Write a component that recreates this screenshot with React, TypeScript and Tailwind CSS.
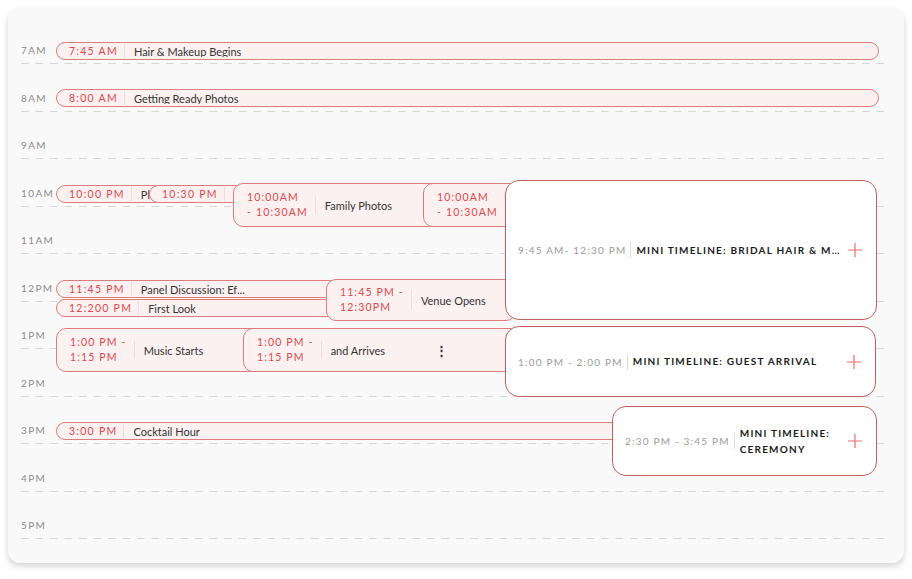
import React from 'react';

const HOURS = ['7AM', '8AM', '9AM', '10AM', '11AM', '12PM', '1PM', '2PM', '3PM', '4PM', '5PM'];

interface PillProps {
  time: string;
  title: string;
  left: number;
  top: number;
  width: number;
}

const Pill: React.FC<PillProps> = ({ time, title, left, top, width }) => (
  <div
    className="absolute flex h-[18px] items-center overflow-hidden rounded-full border border-[#dc7c7b] bg-[#fcf1f1]"
    style={{ left, top, width }}
  >
    <span className="whitespace-nowrap pl-[12px] pr-[6px] text-[10.5px] leading-none tracking-[0.12em] text-[#e0474c]">
      {time}
    </span>
    <span className="h-[14px] w-px bg-[#ecdcdc]" />
    <span className="truncate pl-[9px] text-[11px] leading-none text-[#333]">{title}</span>
  </div>
);

interface BoxProps {
  lines: string[];
  title: string;
  left: number;
  top: number;
  width: number;
  height: number;
  menu?: boolean;
}

const Box: React.FC<BoxProps> = ({ lines, title, left, top, width, height, menu }) => (
  <div
    className="absolute flex items-center rounded-[10px] border border-[#dc7c7b] bg-[#fcf1f1]"
    style={{ left, top, width, height }}
  >
    <div className="flex flex-col gap-[4px] pl-[13px] pr-[7px]">
      {lines.map(l => (
        <span key={l} className="whitespace-nowrap text-[10.5px] leading-[11px] tracking-[0.11em] text-[#e0474c]">
          {l}
        </span>
      ))}
    </div>
    <span className="h-[18px] w-px bg-[#ecdcdc]" />
    <span className="whitespace-nowrap pl-[9px] text-[11px] leading-none text-[#333]">{title}</span>
    {menu && <span className="ml-[50px] text-[13px] font-bold leading-none text-[#333]">⋮</span>}
  </div>
);

const Plus = () => (
  <svg width="16" height="16" viewBox="0 0 16 16" fill="none" stroke="#ef6e6e" strokeWidth="1.2">
    <path d="M8 1v14M1 8h14" />
  </svg>
);

interface MiniProps {
  time: string;
  title: string[];
  left: number;
  top: number;
  width: number;
  height: number;
  truncate?: boolean;
}

const Mini: React.FC<MiniProps> = ({ time, title, left, top, width, height, truncate }) => (
  <div
    className="absolute flex items-center rounded-[14px] border border-[#c4615f] bg-white pl-[12px] pr-[13px]"
    style={{ left, top, width, height }}
  >
    <span className="whitespace-nowrap pr-[4px] text-[10px] leading-none tracking-[0.12em] text-[#9a9a9a]">
      {time}
    </span>
    <span className="h-[16px] w-px bg-[#dddddd]" />
    <div className={`flex min-w-0 flex-1 flex-col gap-[5px] pl-[5px] ${truncate ? 'pr-[2px]' : ''}`}>
      {title.map(t => (
        <span
          key={t}
          className="truncate text-[10px] font-bold leading-[11px] tracking-[0.12em] text-[#1c1c1c]"
        >
          {t}
        </span>
      ))}
    </div>
    <Plus />
  </div>
);

export default function App() {
  return (
    <div className="h-[579px] w-[912px] bg-white p-2" style={{ fontFamily: 'Lato, "Open Sans", sans-serif' }}>
      <div className="relative h-[555px] w-[896px] rounded-[12px] bg-[#f9f9f9] pl-[13px] pr-[14px] pt-[8.5px] shadow-[0_3px_6px_rgba(0,0,0,0.18)]">
        {HOURS.map(h => (
          <div key={h} className="flex h-[47.5px] flex-col justify-end">
            <span className="mb-[8px] text-[10px] leading-[10px] tracking-[0.14em] text-[#8b8b8b]">{h}</span>
            <div className="h-px bg-[linear-gradient(to_right,#d6d6d6_8px,transparent_8px)] bg-[length:14.5px_1px]" />
          </div>
        ))}

        <Pill time="7:45 AM" title="Hair & Makeup Begins" left={48} top={34} width={823} />
        <Pill time="8:00 AM" title="Getting Ready Photos" left={48} top={81} width={823} />

        <Pill time="10:00 PM" title="Photos" left={48} top={177} width={200} />
        <Pill time="10:30 PM" title="Speech" left={141} top={177} width={200} />
        <Box lines={['10:00AM', '- 10:30AM']} title="Family Photos" left={225} top={175} width={270} height={44} />
        <Box lines={['10:00AM', '- 10:30AM']} title="Family Photos" left={415} top={175} width={200} height={44} />

        <Pill time="11:45 PM" title="Panel Discussion: Ef..." left={48} top={272} width={300} />
        <Pill time="12:200 PM" title="First Look" left={48} top={291} width={300} />
        <Box lines={['11:45 PM -', '12:30PM']} title="Venue Opens" left={318} top={271} width={190} height={42} />

        <Mini
          time="9:45 AM- 12:30 PM"
          title={['MINI TIMELINE: BRIDAL HAIR & MAKEUP']}
          left={497}
          top={172}
          width={372}
          height={140}
          truncate
        />

        <Box lines={['1:00 PM -', '1:15 PM']} title="Music Starts" left={48} top={320} width={260} height={44} />
        <Box lines={['1:00 PM -', '1:15 PM']} title="and Arrives" left={235} top={320} width={280} height={44} menu />
        <Mini
          time="1:00 PM - 2:00 PM"
          title={['MINI TIMELINE: GUEST ARRIVAL']}
          left={497}
          top={318}
          width={371}
          height={71}
        />

        <Pill time="3:00 PM" title="Cocktail Hour" left={48} top={414} width={580} />
        <Mini
          time="2:30 PM - 3:45 PM"
          title={['MINI TIMELINE:', 'CEREMONY']}
          left={604}
          top={398}
          width={265}
          height={70}
        />
      </div>
    </div>
  );
}
